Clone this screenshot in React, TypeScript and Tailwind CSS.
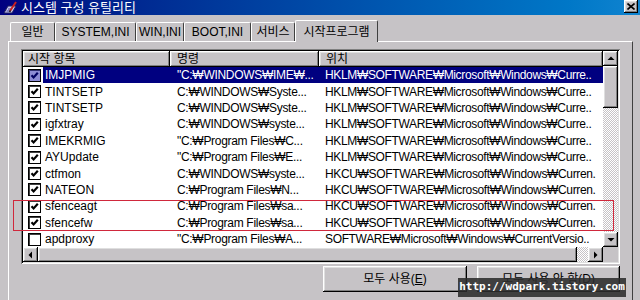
import React from 'react';

type Row = { name: string; cmd: string; loc: string; on: boolean };

const LM = 'HKLM₩SOFTWARE₩Microsoft₩Windows₩Curre..';
const CU = 'HKCU₩SOFTWARE₩Microsoft₩Windows₩Curren.';

const rows: Row[] = [
  { name: 'IMJPMIG', cmd: '"C:₩WINDOWS₩IME₩...', loc: LM, on: true },
  { name: 'TINTSETP', cmd: 'C:₩WINDOWS₩Syste...', loc: LM, on: true },
  { name: 'TINTSETP', cmd: 'C:₩WINDOWS₩Syste...', loc: LM, on: true },
  { name: 'igfxtray', cmd: 'C:₩WINDOWS₩syste...', loc: LM, on: true },
  { name: 'IMEKRMIG', cmd: '"C:₩Program Files₩C...', loc: LM, on: true },
  { name: 'AYUpdate', cmd: '"C:₩Program Files₩E...', loc: LM, on: true },
  { name: 'ctfmon', cmd: 'C:₩WINDOWS₩syste...', loc: CU, on: true },
  { name: 'NATEON', cmd: 'C:₩Program Files₩N...', loc: CU, on: true },
  { name: 'sfenceagt', cmd: 'C:₩Program Files₩sa...', loc: CU, on: true },
  { name: 'sfencefw', cmd: 'C:₩Program Files₩sa...', loc: CU, on: true },
  { name: 'apdproxy', cmd: '"C:₩Program Files₩A...', loc: 'SOFTWARE₩Microsoft₩Windows₩CurrentVersio..', on: false },
];

const tabs = [
  { label: '일반', w: 'w-[45px]' },
  { label: 'SYSTEM,INI', w: 'w-[81px]' },
  { label: 'WIN,INI', w: 'w-[48px]' },
  { label: 'BOOT,INI', w: 'w-[67px]' },
  { label: '서비스', w: 'w-[44px]' },
];

const raised =
  'bg-[#c6c3c6] shadow-[inset_-1px_-1px_#000,inset_1px_1px_#fff,inset_-2px_-2px_#808080,inset_2px_2px_#dfdfdf]';

const dither =
  'bg-[image:repeating-conic-gradient(#ffffff_0_25%,#c6c3c6_0_50%)] bg-[length:2px_2px]';

const Arrow = ({ dir }: { dir: 'up' | 'down' | 'left' | 'right' }) => {
  const d = {
    up: 'M0.5 5 L4 1.5 L7.5 5 Z',
    down: 'M0.5 2 L4 5.5 L7.5 2 Z',
    left: 'M5 0.5 L1.5 4 L5 7.5 Z',
    right: 'M2 0.5 L5.5 4 L2 7.5 Z',
  }[dir];
  return (
    <svg width="8" height="8" viewBox="0 0 8 8">
      <path d={d} fill="#000" />
    </svg>
  );
};

const CheckBox = ({ on, sel }: { on: boolean; sel: boolean }) => (
  <div
    className={
      sel
        ? 'relative h-[13px] w-[13px] border border-black bg-[#8c8cd4] shadow-[inset_1px_1px_#303070]'
        : 'relative h-[13px] w-[13px] border border-black bg-white shadow-[inset_1px_1px_#404040]'
    }
  >
    {on && (
      <svg className="absolute left-[1px] top-[1px]" width="9" height="9" viewBox="0 0 9 9">
        <path d="M1.5 4.2 L3.6 6.4 L7.8 1.8" stroke={sel ? '#000060' : '#000'} strokeWidth="2.2" fill="none" />
      </svg>
    )}
  </div>
);

const AppIcon = () => (
  <svg width="15" height="13" viewBox="0 0 15 13">
    <path d="M1 12 L5 5 L13 5 L9 12 Z" fill="#c8c8f0" stroke="#202060" strokeWidth="1" />
    <path d="M3.5 10 L7 10 M5 8 L9 8" stroke="#404090" strokeWidth="1" />
    <path d="M7 10 L13 1" stroke="#c82020" strokeWidth="2" />
    <path d="M6.5 11 L7.5 9.5" stroke="#202020" strokeWidth="1.5" />
  </svg>
);

export default function App() {
  return (
    <div className="relative h-[300px] w-[640px] overflow-hidden bg-[#c6c3c6] font-['Liberation_Sans','Noto_Sans_CJK_KR',sans-serif] text-[12px] text-black">
      {/* Title bar */}
      <div className="flex h-[15px] items-center bg-linear-to-r from-[#000080] to-[#1084d0] pl-[3px] pr-[2px]">
        <AppIcon />
        <span className="ml-[3px] text-[13px] leading-none text-white">시스템 구성 유틸리티</span>
        <div className={`ml-auto flex h-[13px] w-[14px] items-center justify-center self-start ${raised}`}>
          <svg width="8" height="7" viewBox="0 0 8 7">
            <path d="M0.5 0.5 L7.5 6.5 M7.5 0.5 L0.5 6.5" stroke="#000" strokeWidth="1.6" />
          </svg>
        </div>
      </div>

      {/* Tabs */}
      <div className="mt-[5px] flex h-[21px] items-end pl-[10px]">
        {tabs.map((t) => (
          <div
            key={t.label}
            className={`flex h-[19px] ${t.w} items-center justify-center rounded-t-[2px] border-l border-t border-r border-l-white border-t-white border-r-[#404040] leading-none`}
          >
            {t.label}
          </div>
        ))}
        <div className="relative z-10 -mb-[1px] flex h-[22px] w-[83px] items-center justify-center rounded-t-[2px] border-l border-t border-r border-l-white border-t-white border-r-[#404040] bg-[#c6c3c6] leading-none">
          시작프로그램
        </div>
      </div>

      {/* Panel */}
      <div className="ml-[8px] h-[270px] w-[625px] border-l border-t border-r border-l-white border-t-white border-r-[#404040] pl-[12px] pt-[7px]">
        <div className="h-[215px] w-[599px] bg-[#c6c3c6] p-[2px] shadow-[inset_1px_1px_#808080,inset_-1px_-1px_#fff,inset_2px_2px_#000,inset_-2px_-2px_#dfdfdf]">
          <div className="grid grid-cols-[580px_15px] grid-rows-[196px_15px]">
            {/* List content */}
            <div className="overflow-hidden bg-white">
              <div className="flex h-[16px]">
                <div className={`w-[147px] pl-[5px] leading-[16px] ${raised}`}>시작 항목</div>
                <div className={`w-[149px] pl-[7px] leading-[16px] ${raised}`}>명령</div>
                <div className={`flex-1 pl-[7px] leading-[16px] ${raised}`}>위치</div>
              </div>
              {rows.map((r, i) => {
                const sel = i === 0;
                return (
                  <div key={i} className="flex h-[16.4px] items-center whitespace-nowrap">
                    <div className="w-[20px] pl-[5px]">
                      <CheckBox on={r.on} sel={sel} />
                    </div>
                    <div className={sel ? 'flex h-full flex-1 items-center bg-[#000080] text-white' : 'flex h-full flex-1 items-center'}>
                      <span className="w-[127px] overflow-hidden pl-[2px]">{r.name}</span>
                      <span className="w-[149px] overflow-hidden pl-[7px] tracking-[-0.3px]">{r.cmd}</span>
                      <span className="flex-1 overflow-hidden pl-[6px] tracking-[-0.35px]">{r.loc}</span>
                    </div>
                  </div>
                );
              })}
            </div>

            {/* Vertical scrollbar */}
            <div className="flex flex-col">
              <div className={`flex h-[15px] items-center justify-center ${raised}`}>
                <Arrow dir="up" />
              </div>
              <div className={`h-[42px] ${raised}`} />
              <div className={`flex-1 ${dither}`} />
              <div className={`flex h-[15px] items-center justify-center ${raised}`}>
                <Arrow dir="down" />
              </div>
            </div>

            {/* Horizontal scrollbar */}
            <div className="flex">
              <div className={`flex w-[15px] items-center justify-center ${raised}`}>
                <Arrow dir="left" />
              </div>
              <div className={`w-[539px] ${raised}`} />
              <div className={`flex-1 ${dither}`} />
              <div className={`flex w-[15px] items-center justify-center ${raised}`}>
                <Arrow dir="right" />
              </div>
            </div>
            <div className="bg-[#c6c3c6]" />
          </div>
        </div>

        {/* Buttons */}
        <div className="mt-[2px] flex gap-[10px] pl-[302px]">
          <div className={`flex h-[26px] w-[144px] items-center justify-center ${raised}`}>
            모두 사용(<span className="underline">E</span>)
          </div>
          <div className={`flex h-[26px] w-[143px] items-center justify-center ${raised}`}>
            모두 사용 안 함(<span className="underline">D</span>)
          </div>
        </div>
      </div>

      {/* Red highlight box */}
      <div className="absolute left-[13px] top-[200px] h-[31px] w-[601px] border border-[#d0283c]" />

      {/* Watermark */}
      <div className="absolute left-[458px] top-[278px] flex h-[19px] w-[168px] items-center justify-center bg-[rgba(44,44,44,0.88)] font-['DejaVu_Sans_Mono',monospace] text-[11px] font-bold text-white">
        http://wdpark.tistory.com
      </div>
    </div>
  );
}
